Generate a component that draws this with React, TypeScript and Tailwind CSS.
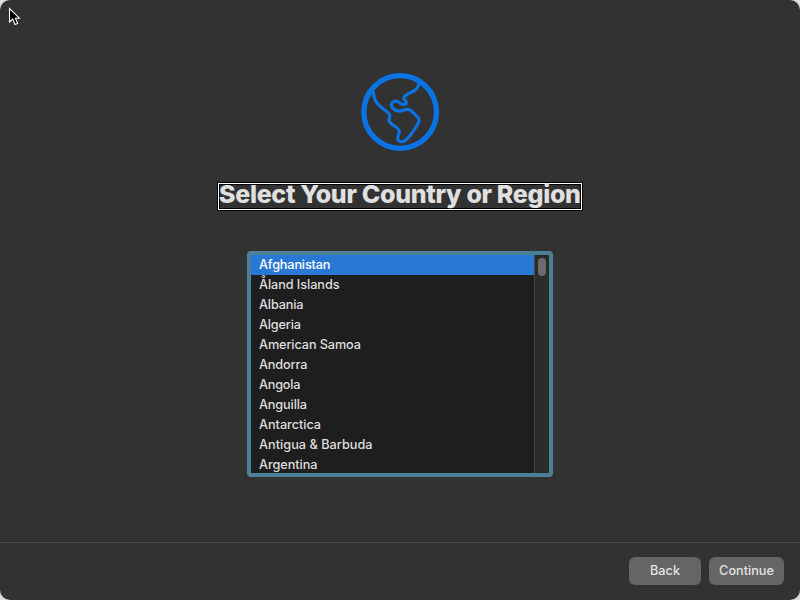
const countries = [
  { name: 'Afghanistan', width: 71.5 },
  { name: 'Åland Islands', width: 80.5 },
  { name: 'Albania', width: 44.5 },
  { name: 'Algeria', width: 42 },
  { name: 'American Samoa', width: 102 },
  { name: 'Andorra', width: 48.5 },
  { name: 'Angola', width: 41.5 },
  { name: 'Anguilla', width: 48 },
  { name: 'Antarctica', width: 62 },
  { name: 'Antigua & Barbuda', width: 113.5 },
  { name: 'Argentina', width: 58.5 },
];

function Globe() {
  return (
    <svg width="100" height="95" viewBox="0 0 300 285" fill="none" stroke="#0b74e5" strokeLinecap="round" strokeLinejoin="round">
      <circle cx="150.5" cy="141" r="109" strokeWidth="16" />
      <path
        strokeWidth="9.5"
        d="M70 82C70 103 80 118 100 132C109 138 117 145 119 151C121 158 115 161 118 169C123 181 147 187 148 199C149 210 141 213 143 222C145 230 154 232 162 229C177 222 191 197 203 178C210 167 209 160 200 153C190 145 185 133 172 133C161 133 156 140 145 138C133 136 121 127 125 116C128 108 137 106 145 111C151 115 155 120 163 119C169 118 171 113 167 108C162 103 158 99 165 93C177 83 193 80 200 71C206 64 207 59 206 53"
      />
    </svg>
  );
}

export default function App() {
  return (
    <div className="h-[600px] w-[800px] overflow-hidden bg-[#dedede] font-['Inter','Liberation_Sans',sans-serif]">
      <main className="relative flex h-full flex-col overflow-hidden rounded-[10px] bg-[#323232]">
        <svg className="absolute left-[8px] top-[7px]" width="14" height="20" viewBox="0 0 14 20">
          <path d="M1.5 1.5V15L4.7 12L7 17.5L9.6 16.4L7.4 11.2H11.4Z" fill="#000" stroke="#fff" strokeWidth="1.1" />
        </svg>
        <section className="flex h-[542px] shrink-0 flex-col items-center pt-[65px]">
          <Globe />
          <h1 className="mt-[22px] flex h-[29px] w-[366px] border border-black">
            <span className="flex w-full border border-white">
              <span className="flex w-full border border-black">
                <svg className="h-[23px] w-full overflow-visible">
                  <text x="-1" y="18" textLength="362" fill="#e0e0e0" className="text-[25px] font-extrabold">
                    Select Your Country or Region
                  </text>
                </svg>
              </span>
            </span>
          </h1>
          <div className="mt-[40px] flex h-[226px] w-[306px] overflow-hidden rounded-[4px] border-4 border-[#4c8098] bg-[#1e1e1e]">
            <ul className="w-[283px] overflow-hidden text-[12.7px] font-medium text-[#dfdfdf]">
              {countries.map(({ name, width }, i) => (
                <li key={name} className={i === 0 ? 'h-5 bg-[#2878d4] pl-2 text-white' : 'h-5 pl-2'}>
                  <svg className="block h-5 w-full overflow-visible">
                    <text x="0" y="14.3" textLength={width} fill="currentColor">
                      {name}
                    </text>
                  </svg>
                </li>
              ))}
            </ul>
            <div className="flex w-[15px] justify-center border-l border-[#454545] bg-[#2b2b2b] pt-[3px]">
              <div className="h-[18px] w-2 rounded-full bg-[#6b6b6b]" />
            </div>
          </div>
        </section>
        <footer className="flex h-[58px] shrink-0 justify-end gap-2 border-t border-[#484848] pr-4 pt-[14px] text-[12.7px] font-medium text-[#e3e3e3]">
          <button className="flex h-7 w-[72px] items-center justify-center rounded-[6px] bg-[#656565] pb-px">Back</button>
          <button className="flex h-7 w-[75px] items-center justify-center rounded-[6px] bg-[#656565] pb-px">Continue</button>
        </footer>
      </main>
    </div>
  );
}
